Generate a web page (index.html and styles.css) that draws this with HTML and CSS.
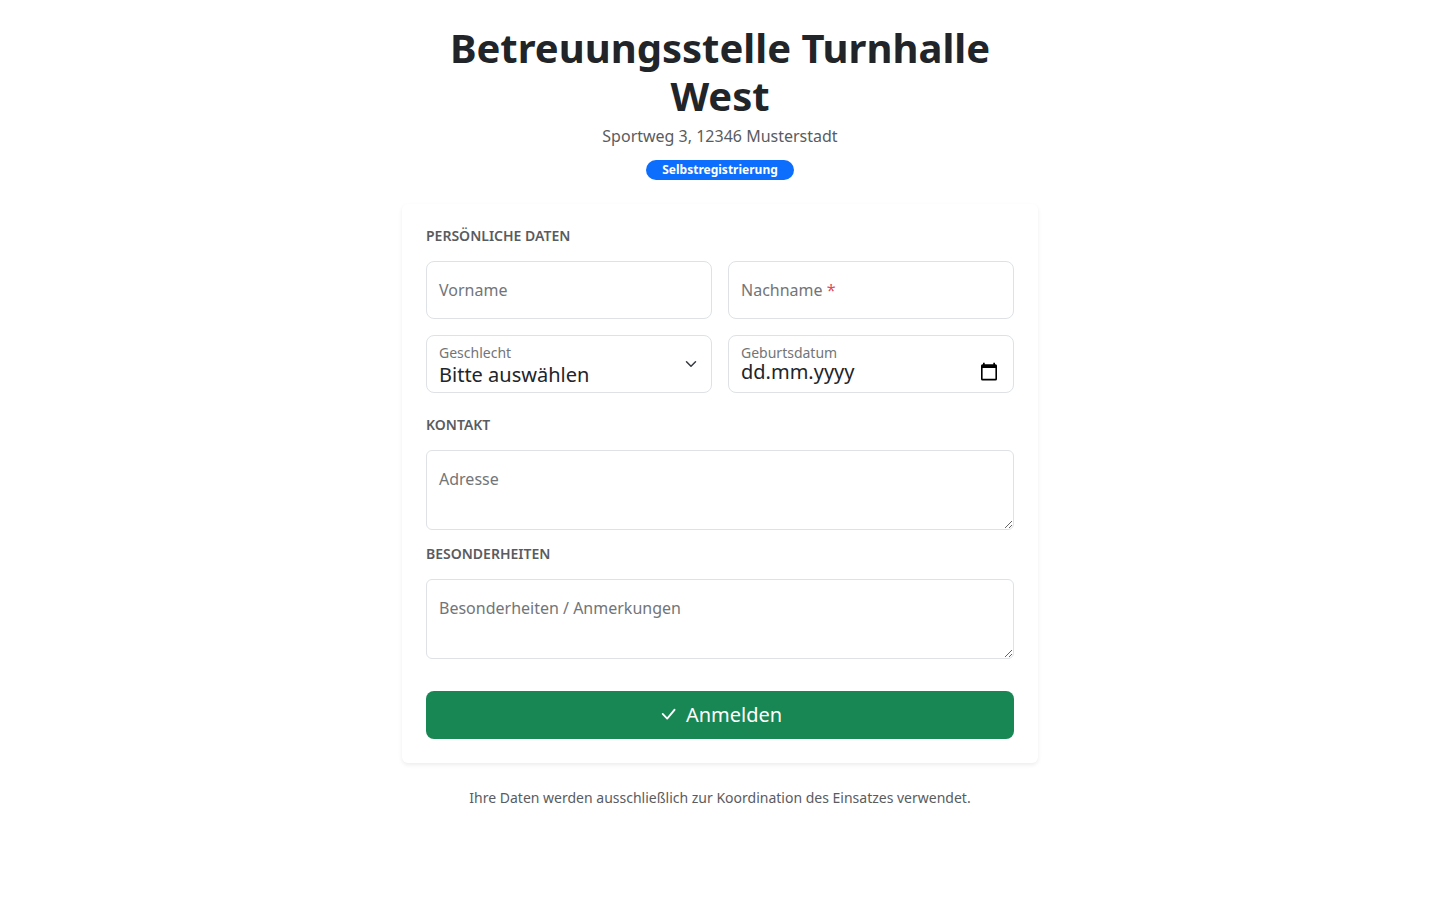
FILE: index.html
```html
<!DOCTYPE html>
<html lang="de">
<head>
<meta charset="utf-8">
<meta name="viewport" content="width=device-width, initial-scale=1">
<title>Selbstregistrierung</title>
<link rel="stylesheet" href="styles.css">
</head>
<body>
<main class="page">
  <header class="head">
    <h1>Betreuungsstelle Turnhalle West</h1>
    <p class="address">Sportweg 3, 12346 Musterstadt</p>
    <span class="badge">Selbstregistrierung</span>
  </header>
  <form class="card">
    <h2>Persönliche Daten</h2>
    <div class="row">
      <div class="field">
        <input class="control" type="text" id="vorname">
        <label for="vorname">Vorname</label>
      </div>
      <div class="field">
        <input class="control" type="text" id="nachname" required>
        <label for="nachname">Nachname <span class="required">*</span></label>
      </div>
      <div class="field filled">
        <select class="control" id="geschlecht">
          <option>Bitte auswählen</option>
          <option>Weiblich</option>
          <option>Männlich</option>
          <option>Divers</option>
        </select>
        <label for="geschlecht">Geschlecht</label>
        <svg class="chevron" viewBox="0 0 16 16" aria-hidden="true"><path d="m2 5 6 6 6-6"/></svg>
      </div>
      <div class="field filled">
        <input class="control date" type="text" id="geburtsdatum" value="dd.mm.yyyy">
        <label for="geburtsdatum">Geburtsdatum</label>
        <button class="calendar" type="button" aria-label="Kalender öffnen"><svg viewBox="0 0 20 20" aria-hidden="true"><path fill-rule="evenodd" d="M4 .7h1.700V2.300h8.600V.7H16V2.300h.5A1.500 1.500 0 0 1 18 3.800v13.100a1.500 1.500 0 0 1-1.500 1.500h-13A1.500 1.500 0 0 1 2 16.900V3.800a1.500 1.500 0 0 1 1.500-1.500H4zM3.600 6v10.800h12.800V6z"/></svg></button>
      </div>
    </div>
    <h2 class="next">Kontakt</h2>
    <div class="field">
      <textarea class="control" id="adresse"></textarea>
      <label for="adresse">Adresse</label>
    </div>
    <h2 class="after-text">Besonderheiten</h2>
    <div class="field">
      <textarea class="control" id="anmerkungen"></textarea>
      <label for="anmerkungen">Besonderheiten / Anmerkungen</label>
    </div>
    <button class="submit" type="submit"><svg viewBox="0 0 16 16" aria-hidden="true"><path transform="translate(0 -.7)" d="M12.736 3.970a.733.733 0 0 1 1.047 0c.286.289.290.756.010 1.050L7.880 12.010a.733.733 0 0 1-1.065.020L3.217 8.384a.757.757 0 0 1 0-1.060.733.733 0 0 1 1.047 0l3.052 3.093 5.400-6.425z"/></svg>Anmelden</button>
  </form>
  <footer>Ihre Daten werden ausschließlich zur Koordination des Einsatzes verwendet.</footer>
</main>
</body>
</html>
```
FILE: styles.css
```css
* { box-sizing: border-box; }
body {
  margin: 0;
  background: #fff;
  color: #212529;
  font: 16px/24px "Noto Sans", "Liberation Sans", sans-serif;
}
.page { max-width: 636px; margin: 0 auto; padding: 24px 0; }
.head { padding: 0 24px; margin-bottom: 24px; text-align: center; }
h1 { margin: 0 0 4px; font-size: 40px; line-height: 48px; font-weight: 700; }
.address { margin: 0 0 12px; color: #595c5f; }
.badge {
  display: block;
  width: fit-content;
  margin: 0 auto;
  padding: 4px 16px;
  border-radius: 10px;
  background: #0d6efd;
  color: #fff;
  font-size: 12px;
  line-height: 12px;
  font-weight: 700;
}
.card {
  padding: 24px;
  border-radius: 6px;
  background: #fff;
  box-shadow: 0 2px 4px rgba(0, 0, 0, .075);
}
h2 {
  margin: 0 0 18px;
  color: #595c5f;
  font-size: 14px;
  line-height: 15px;
  font-weight: 600;
  text-transform: uppercase;
}
.next { margin-top: 24px; }
.after-text { margin-top: 16px; }
.row { display: grid; grid-template-columns: 1fr 1fr; gap: 16px; }
.field { position: relative; }
.control {
  display: block;
  width: 100%;
  height: 58px;
  margin: 0;
  padding: 16px 12px;
  border: 1px solid #dee2e6;
  border-radius: 8px;
  background: #fff;
  color: #212529;
  font: inherit;
  font-size: 20px;
  appearance: none;
}
.control:focus { outline: 2px solid #86b7fe; }
textarea.control { height: 80px; border-radius: 6px; resize: vertical; }
.filled .control { padding: 27px 12px 5px; line-height: 24px; }
.filled .date { padding: 22px 12px 8px; }
.field label {
  position: absolute;
  top: 17px;
  left: 13px;
  color: #727578;
  pointer-events: none;
}
.filled label { top: 8px; font-size: 14px; line-height: 20px; }
.field .required { color: #e04a5e; }
.chevron {
  position: absolute;
  top: 23px;
  right: 15px;
  width: 12px;
  height: 12px;
  fill: none;
  stroke: #343a40;
  stroke-width: 2;
  stroke-linecap: round;
  stroke-linejoin: round;
  pointer-events: none;
}
.calendar {
  position: absolute;
  top: 27px;
  right: 15px;
  width: 20px;
  height: 20px;
  padding: 0;
  border: 0;
  background: none;
}
.calendar svg { display: block; width: 20px; height: 20px; }
.submit {
  display: flex;
  justify-content: center;
  align-items: center;
  gap: 8px;
  width: 100%;
  margin-top: 32px;
  padding: 9px 16px;
  border: 0;
  border-radius: 8px;
  background: #198754;
  color: #fff;
  font: inherit;
  font-size: 20px;
  line-height: 30px;
}
.submit svg { width: 20px; height: 20px; fill: currentColor; }
footer { margin-top: 24px; color: #595c5f; font-size: 14px; line-height: 21px; text-align: center; }
```
